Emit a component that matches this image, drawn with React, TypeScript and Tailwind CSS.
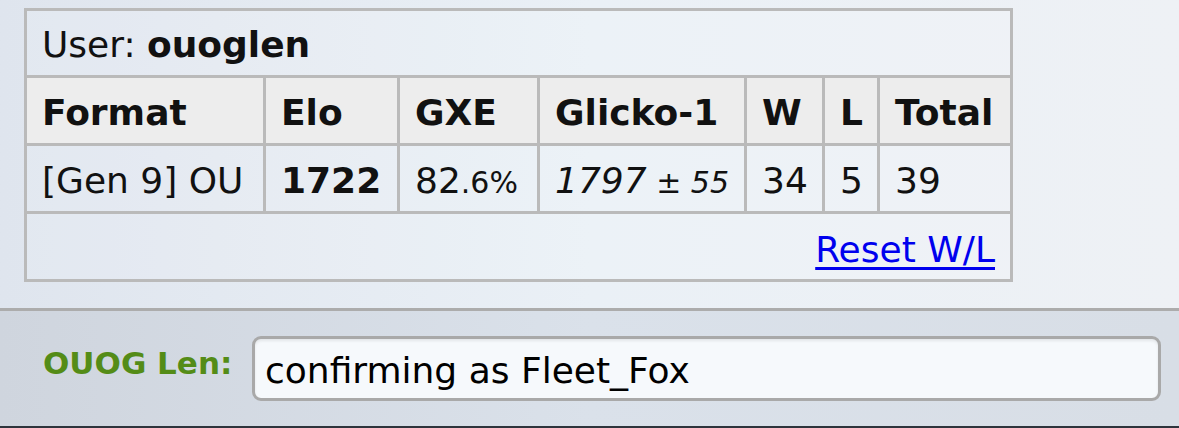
import React from 'react';

const cols = 'grid grid-cols-[239px_134px_140px_207px_78px_55px_133px]';
const cell = 'border-r-[3px] border-b-[3px] border-[#bababa] px-[15px] pt-[4px] flex items-center whitespace-nowrap';

const headers = ['Format', 'Elo', 'GXE', 'Glicko-1', 'W', 'L', 'Total'];

export default function App() {
  return (
    <div
      className="w-[1179px] h-[428px] overflow-hidden flex flex-col text-[#111] bg-gradient-to-r from-[#dfe5ee] via-[#eaf0f6] to-[#eef1f5]"
      style={{ fontFamily: '"DejaVu Sans", Verdana, sans-serif' }}
    >
      <div className="h-[308px] pt-[8px] pl-[24px]">
        <div className="w-[989px] border-l-[3px] border-t-[3px] border-[#bababa] text-[36px]">
          <div className={`${cell} h-[67px] bg-white/10`}>
            <span>
              User: <strong className="font-bold">ouoglen</strong>
            </span>
          </div>
          <div className={cols}>
            {headers.map((h) => (
              <div key={h} className={`${cell} h-[68px] bg-[#ededed] font-bold`}>
                {h}
              </div>
            ))}
          </div>
          <div className={cols}>
            <div className={`${cell} h-[68px] bg-white/10`}>[Gen 9] OU</div>
            <div className={`${cell} h-[68px] bg-white/10 font-bold`}>1722</div>
            <div className={`${cell} h-[68px] bg-white/10`}>
              <span>
                82<span className="text-[30px]">.6%</span>
              </span>
            </div>
            <div className={`${cell} h-[68px] bg-white/10 italic`}>
              <span>
                1797<span className="text-[30px]"> ± 55</span>
              </span>
            </div>
            <div className={`${cell} h-[68px] bg-white/10`}>34</div>
            <div className={`${cell} h-[68px] bg-white/10`}>5</div>
            <div className={`${cell} h-[68px] bg-white/10`}>39</div>
          </div>
          <div className={`${cell} h-[68px] bg-white/10 justify-end !pt-[6px]`}>
            <a href="#" className="text-[#0000ee] underline decoration-[3px] underline-offset-[5px]">
              Reset W/L
            </a>
          </div>
        </div>
      </div>
      <div className="flex-1 border-t-[3px] border-b-[2px] border-t-[#acacac] border-b-[#2e343c] bg-gradient-to-r from-[#cfd5de] via-[#dae1ea] to-[#d8dee6] flex items-center pl-[43px]">
        <span className="w-[209px] self-start mt-[37px] leading-none text-[31px] font-bold text-[#548c17]">
          OUOG Len:
        </span>
        <input
          readOnly
          defaultValue="confirming as Fleet_Fox"
          className="w-[909px] h-[65px] rounded-[9px] border-[3px] border-[#a9a9a9] bg-[#f6f9fc] px-[10px] pt-[4px] text-[36px] text-black outline-none shadow-[inset_0_2px_3px_rgba(0,0,0,0.08)]"
          style={{ fontFamily: '"DejaVu Sans", Verdana, sans-serif' }}
        />
      </div>
    </div>
  );
}
